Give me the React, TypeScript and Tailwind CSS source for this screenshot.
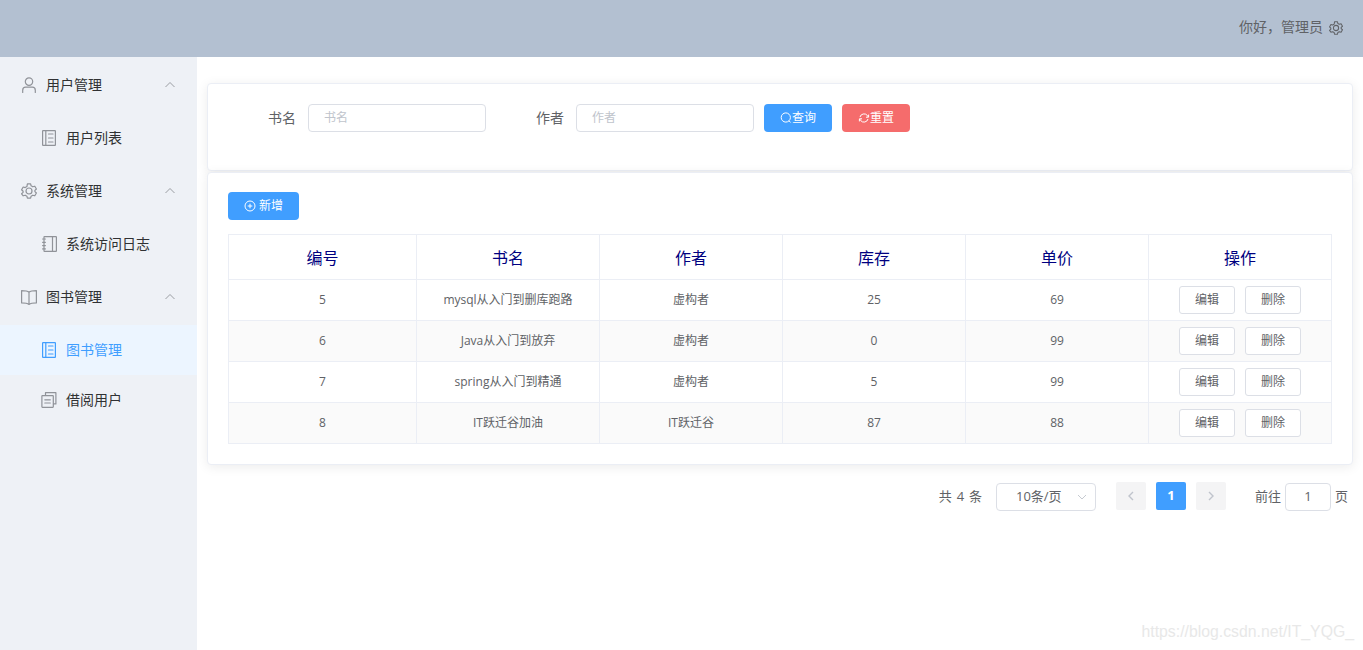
import React from "react";

const S = "fill-none stroke-current";
function Ic({ children, className = "", box = "0 0 16 16" }: { children: React.ReactNode; className?: string; box?: string }) {
  return (
    <svg viewBox={box} strokeWidth={1.2} strokeLinecap="round" strokeLinejoin="round" className={`${S} shrink-0 ${className}`}>
      {children}
    </svg>
  );
}
const User = () => (
  <Ic box="0 0 14 16" className="w-[14px] h-[16px] text-[#909399]">
    <circle cx="7" cy="4.6" r="3.7" />
    <path d="M.7 15.4v-2.2a3 3 0 0 1 3-3h6.6a3 3 0 0 1 3 3v2.2" />
  </Ic>
);
const Gear = ({ className = "w-[16px] h-[16px] text-[#909399]" }: { className?: string }) => (
  <Ic className={className}>
    <path d="M6.4.8h3.2l.5 2 1.7 1 2-.6 1.6 2.8-1.5 1.4v1.2l1.5 1.4-1.6 2.8-2-.6-1.7 1-.5 2H6.4l-.5-2-1.7-1-2 .6L.6 10.8l1.5-1.4V8.2L.6 6.8 2.2 4l2 .6 1.7-1z" />
    <circle cx="8" cy="8" r="3" />
  </Ic>
);
const Tickets = ({ className = "text-[#909399]" }: { className?: string }) => (
  <Ic box="0 0 14 16" className={`w-[14px] h-[16px] ${className}`}>
    <rect x=".6" y=".6" width="12.8" height="14.8" rx="0.5" />
    <path d="M3.8.6v14.8M6.5 4h4.5M6.5 8h4.5M6.5 12h4.5" />
  </Ic>
);
const Notebook = () => (
  <Ic box="0 0 15 16" className="w-[15px] h-[16px] text-[#909399]">
    <rect x="2" y=".6" width="12.4" height="14.8" rx="0.5" />
    <path d="M10.5.6v14.8M.6 3h2.8M.6 6.3h2.8M.6 9.6h2.8M.6 12.9h2.8" />
  </Ic>
);
const Book = () => (
  <Ic box="0 0 16 15" className="w-[16px] h-[15px] text-[#909399]">
    <path d="M8 2.2C6.5 1 4 .7.6.7v12.2c3.4 0 5.9.4 7.4 1.5 1.5-1.1 4-1.5 7.4-1.5V.7C12 .7 9.5 1 8 2.2zM8 2.2v12.2" />
  </Ic>
);
const Copy = () => (
  <Ic className="w-[16px] h-[16px] text-[#909399]">
    <path d="M4.5 3.2V.7h10.4v11.2h-2.4" />
    <rect x=".9" y="3.6" width="11.4" height="11.7" rx="0.5" />
    <path d="M3.8 7.8h5.5M3.8 11h5.5" />
  </Ic>
);
const Up = () => (
  <svg viewBox="0 0 12 12" className={`${S} w-[12px] h-[12px] text-[#909399]`} strokeWidth={0.9}>
    <path d="M1.5 8 6 3.5 10.5 8" />
  </svg>
);

function Group({ icon, label }: { icon: React.ReactNode; label: string }) {
  return (
    <div className="h-[56px] flex items-center pl-[21px] pr-[21px] text-[14px] text-[#303133]">
      <span className="w-[16px] flex justify-center">{icon}</span>
      <span className="ml-[9px] flex-1 pb-[2px]">{label}</span>
      <Up />
    </div>
  );
}
function Item({ icon, label, active }: { icon: React.ReactNode; label: string; active?: boolean }) {
  return (
    <div className={`h-[50px] flex items-center pl-[41px] text-[14px] ${active ? "bg-[#ecf5ff] text-[#409eff]" : "text-[#303133]"}`}>
      <span className="w-[16px] flex justify-center">{icon}</span>
      <span className="ml-[9px] pb-[2px]">{label}</span>
    </div>
  );
}

const rows = [
  ["5", "mysql从入门到删库跑路", "虚构者", "25", "69"],
  ["6", "Java从入门到放弃", "虚构者", "0", "99"],
  ["7", "spring从入门到精通", "虚构者", "5", "99"],
  ["8", "IT跃迁谷加油", "IT跃迁谷", "87", "88"],
];
const heads = ["编号", "书名", "作者", "库存", "单价", "操作"];

function Field({ label, placeholder }: { label: string; placeholder: string }) {
  return (
    <div className="flex items-center">
      <label className="w-[80px] text-right pr-[12px] pb-[2px] text-[14px] text-[#606266]">{label}</label>
      <div className="w-[178px] h-[28px] border border-[#dcdfe6] rounded-[4px] bg-white pl-[15px] flex items-center text-[12px] text-[#c0c4cc]">
        {placeholder}
      </div>
    </div>
  );
}

export default function App() {
  return (
    <div
      className="relative h-[650px] w-[1363px] overflow-hidden bg-white flex flex-col"
      style={{ fontFamily: '"Open Sans","Noto Sans CJK SC",sans-serif' }}
    >
      <header className="h-[57px] shrink-0 bg-[#b3c0d1] flex items-center justify-end pr-[20px] text-[14px] text-[#606266]">
        <span className="pb-[5px]">你好，管理员</span>
        <span className="ml-[6px] pb-[2px]"><Gear className="w-[14px] h-[14px] text-[#606266]" /></span>
      </header>
      <div className="flex flex-1 min-h-0">
        <aside className="w-[197px] shrink-0 bg-[#eef1f6]">
          <Group icon={<User />} label="用户管理" />
          <Item icon={<Tickets />} label="用户列表" />
          <Group icon={<Gear />} label="系统管理" />
          <Item icon={<Notebook />} label="系统访问日志" />
          <Group icon={<Book />} label="图书管理" />
          <Item active icon={<Tickets className="text-[#409eff]" />} label="图书管理" />
          <Item icon={<Copy />} label="借阅用户" />
        </aside>
        <main className="flex-1 px-[10px] pt-[26px]">
          <section className="h-[88px] rounded-[4px] border border-[#ebeef5] bg-white shadow-[0_2px_12px_0_rgba(0,0,0,0.08)] flex items-start pt-[20px] pl-[20px]">
            <Field label="书名" placeholder="书名" />
            <div className="ml-[10px]"><Field label="作者" placeholder="作者" /></div>
            <button className="ml-[10px] w-[68px] h-[28px] rounded-[4px] bg-[#409eff] text-white text-[12px] flex items-center justify-center">
              <svg viewBox="0 0 12 12" className={`${S} w-[12px] h-[12px]`} strokeWidth={1}>
                <circle cx="5.8" cy="5.5" r="4.6" />
                <path d="m9 8.8 1.6 1.7" />
              </svg>
              查询
            </button>
            <button className="ml-[10px] w-[68px] h-[28px] rounded-[4px] bg-[#f56c6c] text-white text-[12px] flex items-center justify-center">
              <svg viewBox="0 0 12 12" className={`${S} w-[12px] h-[12px]`} strokeWidth={1}>
                <path d="M2 5a4.2 4.2 0 0 1 7.3-1.6L10.4 5M10 7a4.2 4.2 0 0 1-7.3 1.6L1.6 7" />
                <path d="M10.6 2.6v2.6H8M1.4 9.4V6.8H4" />
              </svg>
              重置
            </button>
          </section>
          <section className="mt-[1px] h-[293px] rounded-[4px] border border-[#ebeef5] bg-white shadow-[0_2px_12px_0_rgba(0,0,0,0.08)] pt-[19px] px-[20px]">
            <button className="w-[71px] h-[28px] rounded-[4px] bg-[#409eff] text-white text-[12px] flex items-center justify-center">
              <svg viewBox="0 0 12 12" className={`${S} w-[12px] h-[12px]`} strokeWidth={1}>
                <circle cx="6" cy="6" r="5" />
                <path d="M6 3.7v4.6M3.7 6h4.6" />
              </svg>
              <span className="ml-[3px]">新增</span>
            </button>
            <table className="mt-[14px] w-[1103px] table-fixed border-collapse text-center">
              <colgroup>
                <col className="w-[188px]" />
                <col className="w-[183px]" />
                <col className="w-[183px]" />
                <col className="w-[183px]" />
                <col className="w-[183px]" />
                <col className="w-[183px]" />
              </colgroup>
              <thead>
                <tr className="h-[45px]">
                  {heads.map((h) => (
                    <th key={h} className="border border-[#ebeef5] pt-[2px] font-normal text-[16px] text-[#000080]">{h}</th>
                  ))}
                </tr>
              </thead>
              <tbody>
                {rows.map((r, i) => (
                  <tr key={r[0]} className={`h-[41px] ${i % 2 ? "bg-[#fafafa]" : "bg-white"}`}>
                    {r.map((c, j) => (
                      <td key={j} className="border border-[#ebeef5] text-[12px] text-[#606266]">{c}</td>
                    ))}
                    <td className="border border-[#ebeef5]">
                      <div className="flex justify-center gap-[10px]">
                        <button className="w-[56px] h-[28px] rounded-[3px] border border-[#dcdfe6] bg-white text-[12px] text-[#606266]">编辑</button>
                        <button className="w-[56px] h-[28px] rounded-[3px] border border-[#dcdfe6] bg-white text-[12px] text-[#606266]">删除</button>
                      </div>
                    </td>
                  </tr>
                ))}
              </tbody>
            </table>
          </section>
          <div className="mt-[17px] h-[30px] flex items-start pr-[5px] justify-end text-[13px] text-[#606266]">
            <span className="mt-[5px] [word-spacing:1.5px]">共 4 条</span>
            <div className="mt-[1px] ml-[14px] w-[100px] h-[28px] border border-[#dcdfe6] rounded-[4px] flex items-center pl-[19px] pr-[8px]">
              <span className="flex-1">10条/页</span>
              <svg viewBox="0 0 10 10" className={`${S} w-[10px] h-[10px] text-[#c0c4cc]`} strokeWidth={0.9}>
                <path d="M1 3l4 4 4-4" />
              </svg>
            </div>
            <div className="ml-[20px] w-[30px] h-[28px] rounded-[2px] bg-[#f4f4f5] flex items-center justify-center text-[#c0c4cc]">
              <svg viewBox="0 0 10 10" className={`${S} w-[10px] h-[10px]`} strokeWidth={1.4}><path d="M7 1 3 5l4 4" /></svg>
            </div>
            <div className="ml-[10px] w-[30px] h-[28px] rounded-[2px] bg-[#409eff] flex items-center justify-center text-white font-bold">1</div>
            <div className="ml-[10px] w-[30px] h-[28px] rounded-[2px] bg-[#f4f4f5] flex items-center justify-center text-[#c0c4cc]">
              <svg viewBox="0 0 10 10" className={`${S} w-[10px] h-[10px]`} strokeWidth={1.4}><path d="m3 1 4 4-4 4" /></svg>
            </div>
            <span className="mt-[5px] ml-[29px]">前往</span>
            <div className="mt-[1px] ml-[4px] w-[46px] h-[28px] border border-[#dcdfe6] rounded-[4px] flex items-center justify-center">1</div>
            <span className="mt-[5px] ml-[4px]">页</span>
          </div>
        </main>
      </div>
      <div className="absolute right-[9px] top-[621px] text-[15.8px] leading-[22px] text-[#e8e8e8]" style={{ fontFamily: '"Liberation Sans",sans-serif' }}>
        https://blog.csdn.net/IT_YQG_
      </div>
    </div>
  );
}
